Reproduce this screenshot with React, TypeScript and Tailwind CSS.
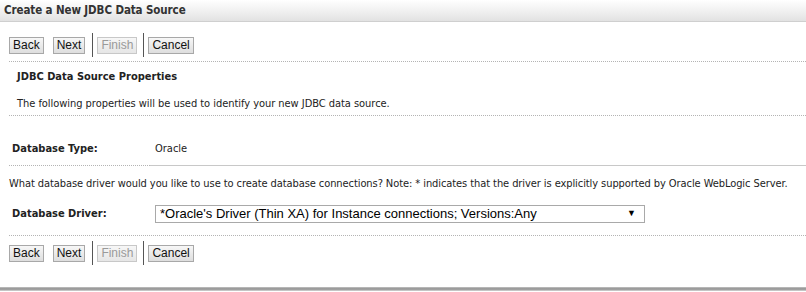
const body = "font-['DejaVu_Sans_Condensed','Liberation_Sans',sans-serif]";

const Btn = ({ label, disabled = false }: { label: string; disabled?: boolean }) => (
  <button
    disabled={disabled}
    className={`h-[17px] px-[3px] border border-[#a8a8a8] bg-gradient-to-b from-[#f7f7f7] to-[#dedede] font-['Liberation_Sans',Arial,sans-serif] text-[12px] leading-[15px] ${
      disabled ? 'text-[#9a9a9a] border-[#c8c8c8] from-[#f2f2f2] to-[#e6e6e6]' : 'text-[#111]'
    }`}
  >
    {label}
  </button>
);

const Sep = ({ className = '' }) => <div className={`w-px h-[24px] bg-[#555] ${className}`} />;

const ButtonBar = () => (
  <div className="flex items-center h-[24px]">
    <Btn label="Back" />
    <div className="w-[9px]" />
    <Btn label="Next" />
    <Sep className="ml-[7px] mr-[4px]" />
    <Btn label="Finish" disabled />
    <Sep className="ml-[6px] mr-[4px]" />
    <Btn label="Cancel" />
  </div>
);

const Dotted = ({ className = '' }) => (
  <div className={`border-t border-dotted border-[#b4b4b4] ${className}`} />
);

export default function App() {
  return (
    <div className={`w-[806px] h-[292px] bg-white text-[#222] ${body} overflow-hidden flex flex-col`}>
      <div className="h-[22px] shrink-0 bg-gradient-to-b from-white via-[#f1f1f1] to-[#e2e2e2] border-b border-[#cfcfcf] px-[4px] flex items-center">
        <span className="text-[11.5px] font-bold text-[#333] tracking-[-0.1px]">
          Create a New JDBC Data Source
        </span>
      </div>

      <div className="pl-[9px] flex flex-col">
        <div className="mt-[11px]">
          <ButtonBar />
        </div>
        <Dotted className="mt-[4px]" />

        <div className="pl-[8px] h-[31px] flex items-center">
          <span className="text-[11px] font-bold text-[#222]">JDBC Data Source Properties</span>
        </div>
        <div className="pl-[8px] h-[22px] flex items-center">
          <span className="text-[11px] tracking-[-0.04px]">
            The following properties will be used to identify your new JDBC data source.
          </span>
        </div>
        <Dotted />

        <div className="h-[49px] flex items-end pb-[8px] pl-[3px] text-[11px]">
          <span className="font-bold w-[143px]">Database Type:</span>
          <span>Oracle</span>
        </div>
        <div className="flex">
          <Dotted className="w-[141px]" />
          <div className="flex-1 border-t border-[#c8c8c8]" />
        </div>

        <div className="h-[36px] flex items-center text-[11px] tracking-[-0.08px]">
          What database driver would you like to use to create database connections? Note: * indicates that the driver is explicitly supported by Oracle WebLogic Server.
        </div>

        <div className="flex items-center pl-[3px] h-[18px] mt-[3px]">
          <span className="font-bold w-[143px] text-[11px]">Database Driver:</span>
          <div className="w-[490px] h-[18px] border border-[#a9a9a9] bg-white flex items-center pl-[4px] pr-[8px] font-['Liberation_Sans',Arial,sans-serif] text-[13px] text-black">
            <span className="flex-1">*Oracle's Driver (Thin XA) for Instance connections; Versions:Any</span>
            <span className="text-[9px]">▼</span>
          </div>
        </div>

        <Dotted className="mt-[12px]" />
        <div className="mt-[5px]">
          <ButtonBar />
        </div>
      </div>

      <div className="mt-auto h-[4px] bg-gradient-to-b from-[#c4c4c4] via-[#8e8e8e] to-[#d8d8d8] mb-[1px]" />
    </div>
  );
}
